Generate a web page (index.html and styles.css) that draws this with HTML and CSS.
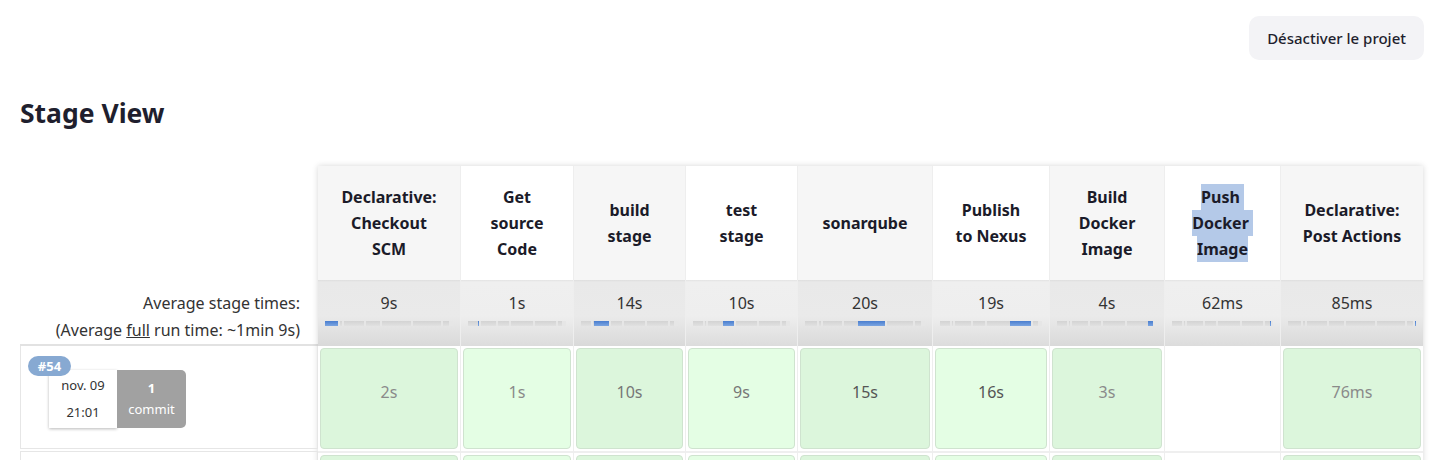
FILE: index.html
```html
<!DOCTYPE html>
<html lang="fr">
<head>
<meta charset="utf-8">
<title>Stage View</title>
<link rel="stylesheet" href="styles.css">
</head>
<body>
<div class="topbar"><button class="btn">Désactiver le projet</button></div>
<h2 class="title">Stage View</h2>
<div class="stage-view">
  <div class="left">
    <div class="l-head"></div>
    <div class="l-avg">
      <div>Average stage times:</div>
      <div>(Average <u>full</u> run time: ~1min 9s)</div>
    </div>
    <div class="l-build">
      <span class="badge">#54</span>
      <div class="run">
        <div class="date"><span>nov. 09</span><span>21:01</span></div>
        <div class="commit"><b>1</b><span>commit</span></div>
      </div>
    </div>
    <div class="l-build next"></div>
  </div>
  <div class="stages">
    <div class="h"><div class="ht">Declarative:<br>Checkout<br>SCM</div></div>
    <div class="h w"><div class="ht">Get<br>source<br>Code</div></div>
    <div class="h"><div class="ht">build<br>stage</div></div>
    <div class="h w"><div class="ht">test<br>stage</div></div>
    <div class="h"><div class="ht">sonarqube</div></div>
    <div class="h w"><div class="ht">Publish<br>to Nexus</div></div>
    <div class="h"><div class="ht">Build<br>Docker<br>Image</div></div>
    <div class="h w"><div class="ht"><span class="sel sp">Push</span><br><span class="sel sp">Docker</span><br><span class="sel">Image</span></div></div>
    <div class="h"><div class="ht">Declarative:<br>Post Actions</div></div>

    <div class="avg"><div class="t">9s</div><div class="bar"><i class="seg on" style="flex-grow:9"></i><i class="seg" style="flex-grow:1"></i><i class="seg" style="flex-grow:14"></i><i class="seg" style="flex-grow:10"></i><i class="seg" style="flex-grow:20"></i><i class="seg" style="flex-grow:19"></i><i class="seg" style="flex-grow:4"></i><i class="seg" style="flex-grow:0.06"></i><i class="seg" style="flex-grow:0.09"></i></div></div>
    <div class="avg w"><div class="t">1s</div><div class="bar"><i class="seg" style="flex-grow:9"></i><i class="seg on" style="flex-grow:1"></i><i class="seg" style="flex-grow:14"></i><i class="seg" style="flex-grow:10"></i><i class="seg" style="flex-grow:20"></i><i class="seg" style="flex-grow:19"></i><i class="seg" style="flex-grow:4"></i><i class="seg" style="flex-grow:0.06"></i><i class="seg" style="flex-grow:0.09"></i></div></div>
    <div class="avg"><div class="t">14s</div><div class="bar"><i class="seg" style="flex-grow:9"></i><i class="seg" style="flex-grow:1"></i><i class="seg on" style="flex-grow:14"></i><i class="seg" style="flex-grow:10"></i><i class="seg" style="flex-grow:20"></i><i class="seg" style="flex-grow:19"></i><i class="seg" style="flex-grow:4"></i><i class="seg" style="flex-grow:0.06"></i><i class="seg" style="flex-grow:0.09"></i></div></div>
    <div class="avg w"><div class="t">10s</div><div class="bar"><i class="seg" style="flex-grow:9"></i><i class="seg" style="flex-grow:1"></i><i class="seg" style="flex-grow:14"></i><i class="seg on" style="flex-grow:10"></i><i class="seg" style="flex-grow:20"></i><i class="seg" style="flex-grow:19"></i><i class="seg" style="flex-grow:4"></i><i class="seg" style="flex-grow:0.06"></i><i class="seg" style="flex-grow:0.09"></i></div></div>
    <div class="avg"><div class="t">20s</div><div class="bar"><i class="seg" style="flex-grow:9"></i><i class="seg" style="flex-grow:1"></i><i class="seg" style="flex-grow:14"></i><i class="seg" style="flex-grow:10"></i><i class="seg on" style="flex-grow:20"></i><i class="seg" style="flex-grow:19"></i><i class="seg" style="flex-grow:4"></i><i class="seg" style="flex-grow:0.06"></i><i class="seg" style="flex-grow:0.09"></i></div></div>
    <div class="avg w"><div class="t">19s</div><div class="bar"><i class="seg" style="flex-grow:9"></i><i class="seg" style="flex-grow:1"></i><i class="seg" style="flex-grow:14"></i><i class="seg" style="flex-grow:10"></i><i class="seg" style="flex-grow:20"></i><i class="seg on" style="flex-grow:19"></i><i class="seg" style="flex-grow:4"></i><i class="seg" style="flex-grow:0.06"></i><i class="seg" style="flex-grow:0.09"></i></div></div>
    <div class="avg"><div class="t">4s</div><div class="bar"><i class="seg" style="flex-grow:9"></i><i class="seg" style="flex-grow:1"></i><i class="seg" style="flex-grow:14"></i><i class="seg" style="flex-grow:10"></i><i class="seg" style="flex-grow:20"></i><i class="seg" style="flex-grow:19"></i><i class="seg on" style="flex-grow:4"></i><i class="seg" style="flex-grow:0.06"></i><i class="seg" style="flex-grow:0.09"></i></div></div>
    <div class="avg w"><div class="t">62ms</div><div class="bar"><i class="seg" style="flex-grow:9"></i><i class="seg" style="flex-grow:1"></i><i class="seg" style="flex-grow:14"></i><i class="seg" style="flex-grow:10"></i><i class="seg" style="flex-grow:20"></i><i class="seg" style="flex-grow:19"></i><i class="seg" style="flex-grow:4"></i><i class="seg on" style="flex-grow:0.06"></i><i class="seg" style="flex-grow:0.09"></i></div></div>
    <div class="avg"><div class="t">85ms</div><div class="bar"><i class="seg" style="flex-grow:9"></i><i class="seg" style="flex-grow:1"></i><i class="seg" style="flex-grow:14"></i><i class="seg" style="flex-grow:10"></i><i class="seg" style="flex-grow:20"></i><i class="seg" style="flex-grow:19"></i><i class="seg" style="flex-grow:4"></i><i class="seg" style="flex-grow:0.06"></i><i class="seg on" style="flex-grow:0.09"></i></div></div>

    <div class="c"><div class="box d1">2s</div></div>
    <div class="c"><div class="box l d1">1s</div></div>
    <div class="c"><div class="box d2">10s</div></div>
    <div class="c"><div class="box l d2">9s</div></div>
    <div class="c"><div class="box d3">15s</div></div>
    <div class="c"><div class="box l d3">16s</div></div>
    <div class="c"><div class="box d1">3s</div></div>
    <div class="c"></div>
    <div class="c"><div class="box d1">76ms</div></div>

    <div class="c"><div class="box"></div></div>
    <div class="c"><div class="box l"></div></div>
    <div class="c"><div class="box"></div></div>
    <div class="c"><div class="box l"></div></div>
    <div class="c"><div class="box"></div></div>
    <div class="c"><div class="box l"></div></div>
    <div class="c"><div class="box"></div></div>
    <div class="c"></div>
    <div class="c"><div class="box"></div></div>
  </div>
</div>
</body>
</html>
```

FILE: styles.css
```css
* { box-sizing: border-box; }

body {
  margin: 0;
  background: #fff;
  color: #1f1f2e;
  font-family: "Noto Sans", "Open Sans", sans-serif;
  overflow: hidden;
}

.topbar {
  display: flex;
  justify-content: flex-end;
  padding: 16px 32px 0;
}

.btn {
  height: 44px;
  padding: 0 18px;
  border: none;
  border-radius: 10px;
  background: #f3f3f6;
  color: #1f1f2e;
  font: 500 15px "Noto Sans", sans-serif;
}

.title {
  margin: 37px 0 0 20px;
  font-size: 26.5px;
  line-height: 32px;
  font-weight: 700;
}

.stage-view {
  display: flex;
  align-items: flex-start;
  margin-top: 37px;
  padding-left: 20px;
}

.left {
  width: 298px;
  flex: none;
}

.l-head { height: 114px; }

.l-avg {
  height: 66px;
  padding: 10px 18px 0 0;
  text-align: right;
  font-size: 16px;
  line-height: 27px;
  color: #333;
  border-bottom: 2px solid #e2e2e2;
}

.l-build {
  position: relative;
  height: 103px;
  margin-bottom: 2px;
  padding: 24px 0 0 28px;
  border: 1px solid #e6e6e6;
  border-top: none;
}

.l-build.next {
  border-top: 1px solid #e6e6e6;
}

.badge {
  position: absolute;
  left: 7px;
  top: 10px;
  z-index: 2;
  width: 43px;
  height: 20px;
  border-radius: 10px;
  background: #87a9d2;
  color: #fff;
  font-size: 13px;
  font-weight: 700;
  line-height: 20px;
  text-align: center;
}

.run {
  display: flex;
}

.date {
  width: 68px;
  height: 58px;
  display: flex;
  flex-direction: column;
  align-items: center;
  justify-content: center;
  background: #fff;
  box-shadow: 0 1px 3px rgba(0, 0, 0, 0.28);
  color: #333;
  font-size: 13px;
  line-height: 27px;
}

.commit {
  width: 69px;
  height: 58px;
  display: flex;
  flex-direction: column;
  align-items: center;
  justify-content: center;
  background: #a1a1a1;
  border-radius: 0 5px 5px 0;
  color: #fff;
  font-size: 13px;
  line-height: 21px;
}

.stages {
  display: grid;
  grid-template-columns: 142px 112px 111px 111px 134px 116px 114px 115px 142px;
  grid-template-rows: 114px 66px 107px 107px;
  column-gap: 1px;
  background: #eeeeee;
  box-shadow: 0 0 6px rgba(0, 0, 0, 0.16);
}

.h {
  display: flex;
  align-items: center;
  justify-content: center;
  text-align: center;
  background: #f6f6f6;
  font-size: 16px;
  font-weight: 700;
  line-height: 26px;
  color: #1b1b29;
}

.h.w { background: #fff; }

.ht { display: block; }

.sel {
  display: inline-block;
  background: #b4c9e8;
}

.sel.sp { padding-right: 4px; }

.avg {
  padding: 12px 7px 0;
  text-align: center;
  background: linear-gradient(#dedede 0, #e9e9e9 2px, #eaeaea 55%, #d9d9d9 100%);
}

.avg.w {
  background: linear-gradient(#e2e2e2 0, #efefef 2px, #eeeeee 55%, #dcdcdc 100%);
}

.t {
  font-size: 16px;
  line-height: 22px;
  color: #333;
}

.bar {
  display: flex;
  height: 5px;
  margin-top: 7px;
}

.seg {
  flex-basis: 0;
  min-width: 0;
  background: linear-gradient(#d3d3d3, #e1e1e1);
  border-left: 2px solid #e6e6e6;
}

.seg:first-child { border-left: none; }

.seg.on {
  min-width: 1px;
  border-left: none;
  background: linear-gradient(#4a7ecf, #7ba5e1);
}

.c {
  padding: 2px;
  background: #fff;
  border-bottom: 2px solid #efefef;
}

.box {
  height: 100%;
  display: flex;
  align-items: center;
  justify-content: center;
  padding-bottom: 14px;
  border: 1px solid #cfe3cf;
  border-radius: 4px;
  background: #dcf6dc;
  font-size: 16px;
  color: #8a8a8a;
}

.box.l { background: #e4fee4; }

.box.d2 { color: #777; }
.box.d3 { color: #555; }
```
